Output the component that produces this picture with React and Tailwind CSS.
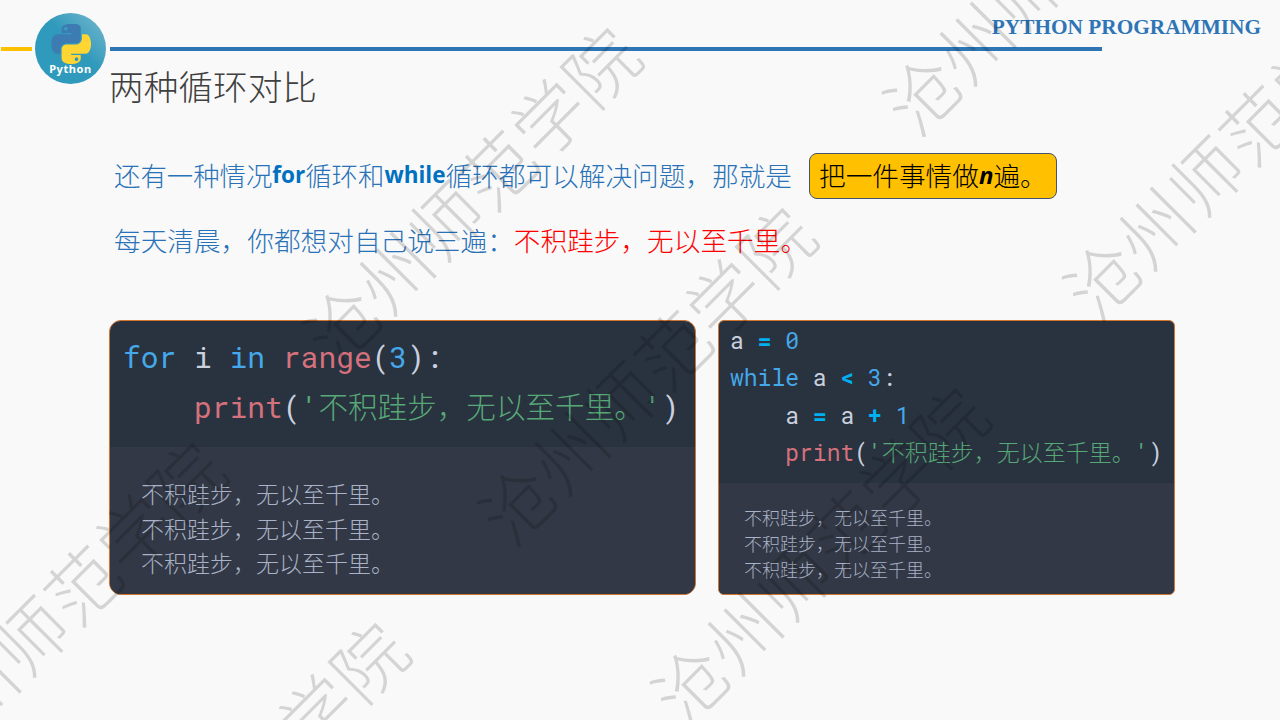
const CJK = "font-['Noto_Sans_CJK_SC','Noto_Sans',sans-serif]";
const MONO = "font-['Roboto_Mono','Noto_Sans_CJK_SC',monospace]";
const SENT = "不积跬步，无以至千里。";

function Logo() {
  return (
    <div className="w-[71px] h-[71px] rounded-full bg-gradient-to-tr from-[#2f9abb] from-55% to-[#74b9cf] flex flex-col items-center shrink-0 pt-[11px]">
      <svg width="40" height="40" viewBox="0 0 110 112">
        <path fill="#3c7cb2" d="M54.92 0C50.34.02 45.96.41 42.11 1.09 30.76 3.1 28.7 7.29 28.7 15.03v10.22h26.81v3.41H18.64c-7.79 0-14.62 4.68-16.75 13.59-2.46 10.21-2.57 16.59 0 27.25 1.9 7.94 6.45 13.59 14.25 13.59h9.22v-12.25c0-8.85 7.66-16.66 16.75-16.66h26.78c7.45 0 13.41-6.14 13.41-13.62V14.03C83.3 6.77 77.17 1.31 69.89.09 65.28-.68 59.5-.02 54.92 0zM40.42 8.22c2.77 0 5.03 2.3 5.03 5.12 0 2.82-2.26 5.1-5.03 5.1-2.78 0-5.03-2.28-5.03-5.1 0-2.82 2.25-5.12 5.03-5.12z" />
        <path fill="#ffd534" d="M85.64 28.66v11.9c0 9.24-7.83 17-16.75 17H42.11c-7.34 0-13.41 6.28-13.41 13.63v25.53c0 7.27 6.32 11.54 13.41 13.63 8.49 2.49 16.62 2.94 26.78 0 6.75-1.96 13.41-5.89 13.41-13.63V86.5H55.52v-3.4H95.7c7.8 0 10.7-5.44 13.41-13.6 2.8-8.4 2.74-16.47 0-27.25-1.93-7.75-5.6-13.59-13.41-13.59zM70.57 93.31c2.78 0 5.03 2.28 5.03 5.1 0 2.82-2.25 5.12-5.03 5.12-2.77 0-5.03-2.3-5.03-5.12 0-2.82 2.26-5.1 5.03-5.1z" />
      </svg>
      <span className="font-['Noto_Sans',sans-serif] font-bold text-white text-[11px] leading-[12px] tracking-[0.6px] mt-[-1px]">Python</span>
    </div>
  );
}

function Output({ className }) {
  return (
    <div className={`flex-1 bg-[#323845] text-[#a9b2c6] font-light ${CJK} ${className}`}>
      <div>{SENT}</div>
      <div>{SENT}</div>
      <div>{SENT}</div>
    </div>
  );
}

const KW = "text-[#45a8ea]";
const FN = "text-[#d4717c]";
const STR = "text-[#57a877]";
const PL = "text-[#c9d0de]";
const OP = "text-[#00b0f0] font-bold";
const LATIN = "font-['Open_Sans',sans-serif] font-bold text-[#0070c0] text-[22.5px]";

const WM = `absolute -translate-x-1/2 -translate-y-1/2 -rotate-45 whitespace-nowrap text-[72px] font-light leading-none tracking-[1px] text-black/15 pointer-events-none ${CJK}`;

export default function App() {
  return (
    <div className={`relative w-[1280px] h-[720px] overflow-hidden bg-[#f9f9f9] font-light ${CJK}`}>
      <div className="flex pt-[13px] pl-[1px]">
        <div className="w-[31px] h-1 mt-[34px] bg-[#ffc000] shrink-0" />
        <div className="ml-[3px]"><Logo /></div>
        <div className="flex-1 ml-[4px] flex flex-col">
          <div className="h-[34px] text-right pr-[19px] font-['Liberation_Serif',serif] font-bold text-[21.3px] leading-[28px] text-[#2e75b6]">PYTHON PROGRAMMING</div>
          <div className="w-[992px] h-1 bg-[#2e75b6]" />
          <div className="mt-[14px] -ml-px text-[34.67px] leading-10 text-[#404040]">两种循环对比</div>
        </div>
      </div>

      <div className="mt-[-22px] pl-[114px] text-[26.4px] text-[#2a72b8]">
        <div className="flex items-center h-[46px] mt-[70px] leading-[46px] whitespace-nowrap">
          <div className="flex items-center mb-[2px]">
            <span>还有一种情况</span>
            <span className={LATIN}>for</span>
            <span>循环和</span>
            <span className={LATIN}>while</span>
            <span className="text-[26.67px]">循环都可以解决问题，那就是</span>
          </div>
          <div className="ml-[17px] w-[248px] h-[46px] rounded-[8px] border-[1.5px] border-[#44546a] bg-[#ffc000] text-black pl-[9px] pb-[2px] flex items-center text-[26.67px]">
            <span>把一件事情做</span>
            <span className="font-['Open_Sans',sans-serif] font-bold italic text-[24px]">n</span>
            <span>遍。</span>
          </div>
        </div>
        <div className="mt-[18px] leading-[46px] h-[46px] whitespace-nowrap text-[26.67px]">
          每天清晨，你都想对自己说三遍：<span className="text-[#ff0000]">不积跬步，无以至千里。</span>
        </div>
      </div>

      <div className="flex gap-[22px] ml-[109px] mt-[57px]">
        <div className="w-[587px] h-[275px] rounded-xl border-[1.5px] border-[#d2752f] overflow-hidden flex flex-col bg-[#29323f]">
          <pre className={`h-[126px] shrink-0 pl-[13px] pt-[11px] text-[29.6px] leading-[50px] font-normal ${MONO} ${PL}`}>
            <div><span className={KW}>for</span> i <span className={KW}>in</span> <span className={FN}>range</span>(<span className={KW}>3</span>):</div>
            <div>{"    "}<span className={FN}>print</span>(<span className={STR}>'<span className="font-light">{SENT}</span>'</span>)</div>
          </pre>
          <Output className="pl-[31px] pt-[29px] text-[23px] leading-[34.5px]" />
        </div>
        <div className="w-[457px] h-[275px] rounded-md border-[1.5px] border-[#d2752f] overflow-hidden flex flex-col bg-[#29323f]">
          <pre className={`h-[162px] shrink-0 pl-[11px] pt-[1px] text-[23px] leading-[37.4px] font-normal ${MONO} ${PL}`}>
            <div>a <span className={OP}>=</span> <span className={KW}>0</span></div>
            <div><span className={KW}>while</span> a <span className={OP}>&lt;</span> <span className={KW}>3</span>:</div>
            <div>{"    "}a <span className={OP}>=</span> a <span className={OP}>+</span> <span className={KW}>1</span></div>
            <div>{"    "}<span className={FN}>print</span>(<span className={STR}>'<span className="font-light">{SENT}</span>'</span>)</div>
          </pre>
          <Output className="pl-[25px] pt-[21px] text-[18px] leading-[26px]" />
        </div>
      </div>

      <div className={`${WM} left-[470px] top-[193px]`}>沧州师范学院</div>
      <div className={`${WM} left-[645px] top-[373px]`}>沧州师范学院</div>
      <div className={`${WM} left-[55px] top-[608px]`}>沧州师范学院</div>
      <div className={`${WM} left-[238px] top-[788px]`}>沧州师范学院</div>
      <div className={`${WM} left-[818px] top-[553px]`}>沧州师范学院</div>
      <div className={`${WM} left-[1050px] top-[-37px]`}>沧州师范学院</div>
      <div className={`${WM} left-[1230px] top-[148px]`}>沧州师范学院</div>
    </div>
  );
}
